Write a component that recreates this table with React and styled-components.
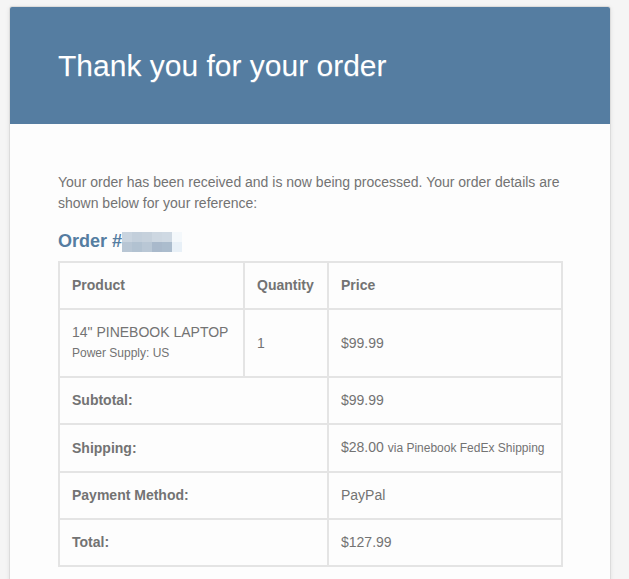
import React from "react";
import styled, { createGlobalStyle } from "styled-components";

const GlobalStyle = createGlobalStyle`
  html, body {
    margin: 0;
    padding: 0;
    background: #f5f5f5;
  }
  body {
    font-family: "Liberation Sans", Helvetica, Arial, sans-serif;
  }
`;

const Wrapper = styled.div`
  padding: 6px 0 0 9px;
`;

const Container = styled.div`
  width: 600px;
  background: #fdfdfd;
  border: 1px solid #dcdcdc;
  border-radius: 3px;
  box-shadow: 0 1px 4px rgba(0, 0, 0, 0.08);
  overflow: hidden;
`;

const Header = styled.div`
  background: #557da1;
  padding: 36px 48px;
`;

const Title = styled.h1`
  margin: 0;
  color: #ffffff;
  font-size: 30px;
  font-weight: 300;
  line-height: 45px;
  text-shadow: 0 1px 0 #7797b4;
`;

const Body = styled.div`
  padding: 48px 48px 32px;
  color: #737373;
  font-size: 14px;
  line-height: 21px;
`;

const Intro = styled.p`
  margin: 0 0 16px;
`;

const OrderHeading = styled.h2`
  display: flex;
  align-items: center;
  margin: 0 0 8px;
  color: #557da1;
  font-size: 18px;
  font-weight: bold;
  line-height: 23px;
`;

const Blur = styled.span`
  display: grid;
  grid-template-columns: repeat(6, 10px);
  grid-template-rows: 10px 10px;
`;

const Pixel = styled.span`
  background: ${(p) => p.$c};
`;

const Table = styled.table`
  width: 503px;
  border: 1px solid #e4e4e4;
  border-spacing: 0;
  border-collapse: separate;
  color: #737373;
  table-layout: fixed;
`;

const Cell = styled.td`
  border: 1px solid #e4e4e4;
  padding: 12px;
  text-align: left;
  vertical-align: middle;
  color: #737373;
  font-size: 14px;
  line-height: 21px;
  font-weight: ${(p) => (p.$bold ? "bold" : "normal")};
`;

const HeadCell = styled(Cell).attrs({ as: "th" })`
  font-weight: bold;
`;

const ProductName = styled.div`
  font-size: 14px;
  line-height: 21px;
`;

const Meta = styled.div`
  font-size: 12px;
  line-height: 21px;
`;

const Small = styled.small`
  font-size: 12px;
`;

const blurColors = [
  "#c9d4df", "#c3cfdb", "#c6d1dc", "#cdd7e1", "#cfd9e3", "#f4f8fb",
  "#b8c6d4", "#b2c2d1", "#b9c7d5", "#a9b9cb", "#abbccd", "#e8f0f7",
];

const totals = [
  { label: "Subtotal:", value: "$99.99" },
  {
    label: "Shipping:",
    value: (
      <>
        $28.00 <Small>via Pinebook FedEx Shipping</Small>
      </>
    ),
  },
  { label: "Payment Method:", value: "PayPal" },
  { label: "Total:", value: "$127.99" },
];

export default function App() {
  return (
    <Wrapper>
      <GlobalStyle />
      <Container>
        <Header>
          <Title>Thank you for your order</Title>
        </Header>
        <Body>
          <Intro>
            Your order has been received and is now being processed. Your
            order details are shown below for your reference:
          </Intro>
          <OrderHeading>
            Order #
            <Blur>
              {blurColors.map((c, i) => (
                <Pixel key={i} $c={c} />
              ))}
            </Blur>
          </OrderHeading>
          <Table>
            <colgroup>
              <col style={{ width: "185px" }} />
              <col style={{ width: "84px" }} />
              <col style={{ width: "234px" }} />
            </colgroup>
            <thead>
              <tr>
                <HeadCell>Product</HeadCell>
                <HeadCell>Quantity</HeadCell>
                <HeadCell>Price</HeadCell>
              </tr>
            </thead>
            <tbody>
              <tr>
                <Cell>
                  <ProductName>14" PINEBOOK LAPTOP</ProductName>
                  <Meta>Power Supply: US</Meta>
                </Cell>
                <Cell>1</Cell>
                <Cell>$99.99</Cell>
              </tr>
            </tbody>
            <tfoot>
              {totals.map((t) => (
                <tr key={t.label}>
                  <Cell as="th" colSpan={2} $bold>
                    {t.label}
                  </Cell>
                  <Cell>{t.value}</Cell>
                </tr>
              ))}
            </tfoot>
          </Table>
        </Body>
      </Container>
    </Wrapper>
  );
}
